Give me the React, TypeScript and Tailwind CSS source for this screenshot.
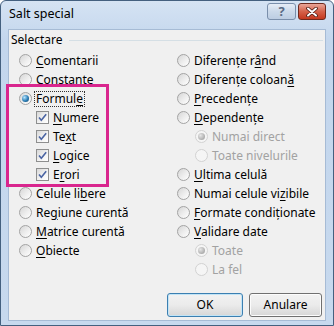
import React from 'react';

type Opt = { label: string; checked?: boolean; disabled?: boolean; indent?: boolean; focus?: boolean };

// "&" marks the access-key letter
function Label({ text }: { text: string }) {
  const i = text.indexOf('&');
  if (i < 0) return <>{text}</>;
  return (
    <>
      {text.slice(0, i)}
      <span className="underline underline-offset-[2px] decoration-1">{text[i + 1]}</span>
      {text.slice(i + 2)}
    </>
  );
}

function RadioDot({ checked, disabled }: { checked?: boolean; disabled?: boolean }) {
  return (
    <span
      className={`w-[13px] h-[13px] rounded-full border flex items-center justify-center shrink-0 ${
        disabled
          ? 'border-[#d2d2d2] bg-[#f5f5f5]'
          : 'border-[#a3a3a3] bg-[linear-gradient(135deg,#d6d6d6,#eeeeee_55%,#ffffff)]'
      }`}
    >
      {checked && (
        <span
          className={`w-[7px] h-[7px] rounded-full ${
            disabled
              ? 'bg-[radial-gradient(circle_at_35%_35%,#e6e6e6,#adadad_70%)]'
              : 'bg-[radial-gradient(circle_at_35%_35%,#b9e6ff,#2b7db5_55%,#123f63)]'
          }`}
        />
      )}
    </span>
  );
}

function CheckBox() {
  return (
    <span className="w-[13px] h-[13px] border border-[#8e8f8f] bg-[linear-gradient(135deg,#d8d8d8,#f4f4f4_60%,#ffffff)] flex items-center justify-center shrink-0">
      <svg width="11" height="11" viewBox="0 0 11 11">
        <path d="M2 5.6 L4.3 8.3 L9.2 2.2" fill="none" stroke="#4a64a3" strokeWidth="1.6" />
      </svg>
    </span>
  );
}

function RadioRow({ label, checked, disabled, indent, focus }: Opt) {
  return (
    <div className={`h-[19px] flex items-center gap-[2px] ${indent ? 'pl-[18px]' : ''}`}>
      <RadioDot checked={checked} disabled={disabled} />
      <span
        className={`leading-[14px] px-[1px] border ${focus ? 'border-dotted border-[#333]' : 'border-transparent'} ${
          disabled ? 'text-[#a2a2a2]' : 'text-black'
        }`}
      >
        <Label text={label} />
      </span>
    </div>
  );
}

function CheckRow({ label }: { label: string }) {
  return (
    <div className="h-[19px] flex items-center gap-[3px] pl-[17px]">
      <CheckBox />
      <span className="px-[1px] text-black">
        <Label text={label} />
      </span>
    </div>
  );
}

const rightOpts: Opt[] = [
  { label: 'Diferențe r&ând' },
  { label: 'Diferențe coloan&ă' },
  { label: '&Precedențe' },
  { label: '&Dependențe' },
  { label: 'Numai direct', checked: true, disabled: true, indent: true },
  { label: 'Toate nivelurile', disabled: true, indent: true },
  { label: '&Ultima celulă' },
  { label: 'Numai celule vi&zibile' },
  { label: '&Formate condiționate' },
  { label: '&Validare date' },
  { label: 'Toate', checked: true, disabled: true, indent: true },
  { label: 'La fel', disabled: true, indent: true },
];

export default function App() {
  return (
    <div
      className="relative w-[334px] h-[326px] flex flex-col px-[7px] pb-[4px] rounded-t-[6px] border border-[#44607f] bg-[linear-gradient(180deg,#d5e3f3,#c3d6ed_40px,#c7d9ee)] text-[12px]"
      style={{ fontFamily: '"Segoe UI", "Noto Sans", sans-serif' }}
    >
      {/* title bar */}
      <div className="h-[28px] flex items-start shrink-0">
        <div className="pt-[4px] pl-[1px] text-[12.5px] text-black">Salt special</div>
        <div className="ml-auto mt-[2px] flex gap-[2px]">
          <div className="w-[29px] h-[17px] rounded-[3px] border border-[#7a8fab] bg-[linear-gradient(180deg,#e6edf6,#cbd9ea_50%,#bccde2)] flex items-center justify-center text-[13px] font-bold text-[#5a6b84] leading-none">
            ?
          </div>
          <div className="w-[28px] h-[17px] rounded-[3px] border border-[#6e2a1e] bg-[linear-gradient(180deg,#e9a699,#d5624a_50%,#c5391f)] flex items-center justify-center">
            <svg width="12" height="10" viewBox="0 0 12 10">
              <path d="M2 1.5 L10 8.5 M10 1.5 L2 8.5" stroke="#4a1a12" strokeWidth="3.6" strokeLinecap="round" />
              <path d="M2 1.5 L10 8.5 M10 1.5 L2 8.5" stroke="#ffffff" strokeWidth="2" strokeLinecap="round" />
            </svg>
          </div>
        </div>
      </div>

      {/* client area */}
      <div className="flex-1 flex flex-col bg-[#f0f0f0] border border-[#a6bbd5]">
        <div className="flex items-center h-[16px] mt-[2px] pl-[2px] pr-[2px]">
          <span className="text-black">Selectare</span>
          <div className="flex-1 h-px bg-[#d5dfe5] ml-[6px]" />
        </div>

        <div className="grid grid-cols-[158px_1fr] mt-[3px] pl-[10px]">
          <div className="flex flex-col">
            <RadioRow label="&Comentarii" />
            <RadioRow label="Constante" />
            <RadioRow label="Formul&e" checked focus />
            <CheckRow label="&Numere" />
            <CheckRow label="Te&xt" />
            <CheckRow label="&Logice" />
            <CheckRow label="E&rori" />
            <RadioRow label="Celule li&bere" />
            <RadioRow label="Re&giune curentă" />
            <RadioRow label="&Matrice curentă" />
            <RadioRow label="&Obiecte" />
          </div>
          <div className="flex flex-col">
            {rightOpts.map((o) => (
              <RadioRow key={o.label} {...o} />
            ))}
          </div>
        </div>

        <div className="mt-auto mb-[3px] flex justify-end gap-[6px] pr-[3px]">
          <button className="w-[76px] h-[24px] rounded-[3px] border border-[#3c7fb1] bg-[linear-gradient(180deg,#f2f2f2,#ebebeb_50%,#d6d6d6)] shadow-[inset_0_0_0_1px_#c2e4f6] text-black">
            OK
          </button>
          <button className="w-[73px] h-[24px] rounded-[3px] border border-[#707070] bg-[linear-gradient(180deg,#f2f2f2,#ebebeb_50%,#d6d6d6)] shadow-[inset_0_0_0_1px_#fcfcfc] text-black">
            Anulare
          </button>
        </div>
      </div>

      {/* highlight annotation */}
      <div className="absolute left-[5px] top-[83px] w-[103px] h-[103px] border-[3px] border-[#d9268e] pointer-events-none" />
    </div>
  );
}
